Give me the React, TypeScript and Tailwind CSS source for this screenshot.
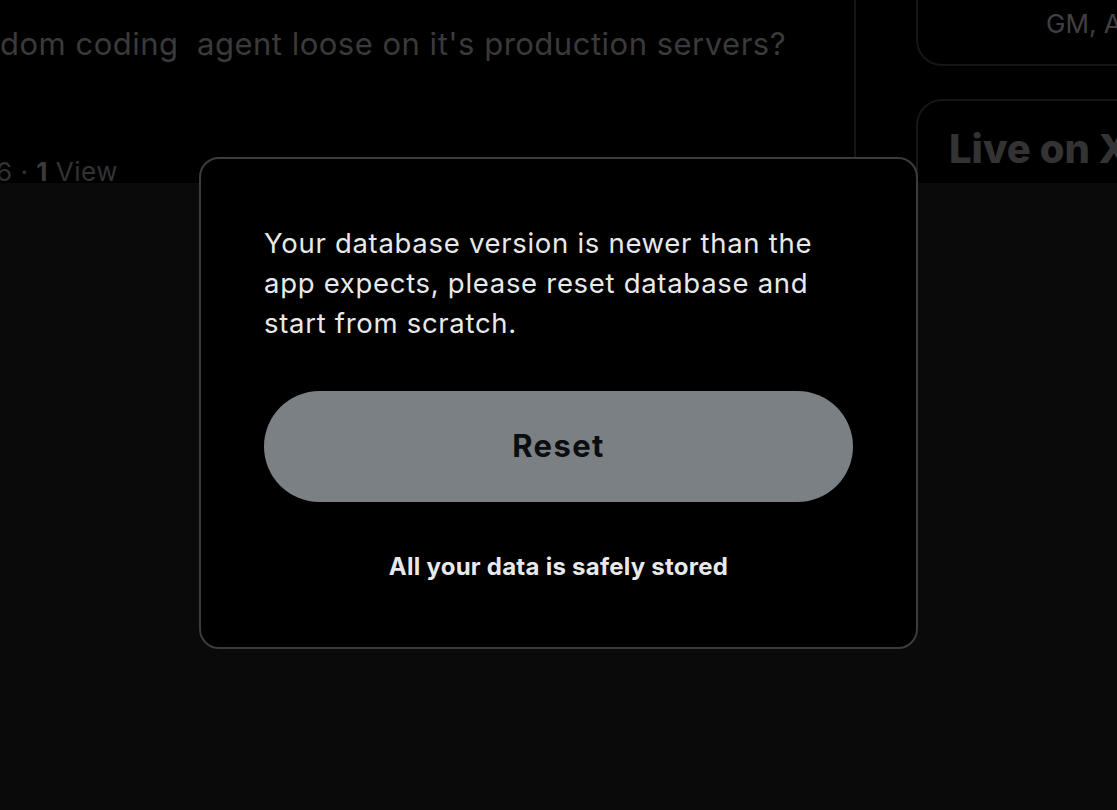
import React from "react";

export default function App() {
  const font = { fontFamily: "Inter, 'Noto Sans', 'Liberation Sans', sans-serif" };
  return (
    <div className="relative w-[1117px] h-[810px] overflow-hidden bg-[#0a0a0a]" style={font}>
      {/* background page (dimmed) */}
      <div className="flex h-[183px] overflow-hidden bg-black">
        <div className="w-[856px] shrink-0 border-r-[2px] border-[#161616] flex flex-col">
          <div className="pt-[24px] text-[31px] leading-[40px] text-[#3a3a3a] whitespace-nowrap tracking-[0.5px]">
            dom coding&nbsp; agent loose on it's production servers?
          </div>
          <div className="mt-[92px] text-[26px] leading-[32px] text-[#333] whitespace-nowrap -ml-[4px] tracking-[0.5px]">
            6 · <span className="font-bold text-[#3a3a3a]">1</span> View
          </div>
        </div>
        <div className="flex-1 pl-[60px] flex flex-col">
          <div className="h-[86px] -mt-[20px] shrink-0 rounded-bl-[26px] border-l-[2px] border-b-[2px] border-[#161616] pt-[28px] pl-[128px] text-[26px] leading-[32px] text-[#404040] whitespace-nowrap">
            GM, A
          </div>
          <div className="mt-[33px] h-[120px] shrink-0 rounded-tl-[26px] border-l-[2px] border-t-[2px] border-[#161616] pt-[23px] pl-[31px] text-[40px] leading-[50px] font-extrabold text-[#333] whitespace-nowrap">
            Live on X
          </div>
        </div>
      </div>

      {/* modal */}
      <div className="absolute left-[199px] top-[157px] w-[719px] h-[492px] rounded-[20px] border-[2px] border-[#3a3d40] bg-black flex flex-col pt-[64px] px-[63px]">
        <p className="text-[27.5px] leading-[40px] text-[#e7e9ea] tracking-[0.7px]">
          Your database version is newer than the app expects, please reset database and start from scratch.
        </p>
        <button className="mt-[48px] h-[111px] w-full shrink-0 rounded-full bg-[#7b8084] text-[31px] font-bold text-[#0b0d0f] tracking-[1.4px]">
          Reset
        </button>
        <div className="mt-[48px] text-center text-[24px] leading-[34px] font-bold text-[#e7e9ea] tracking-[0.25px]">
          All your data is safely stored
        </div>
      </div>
    </div>
  );
}
